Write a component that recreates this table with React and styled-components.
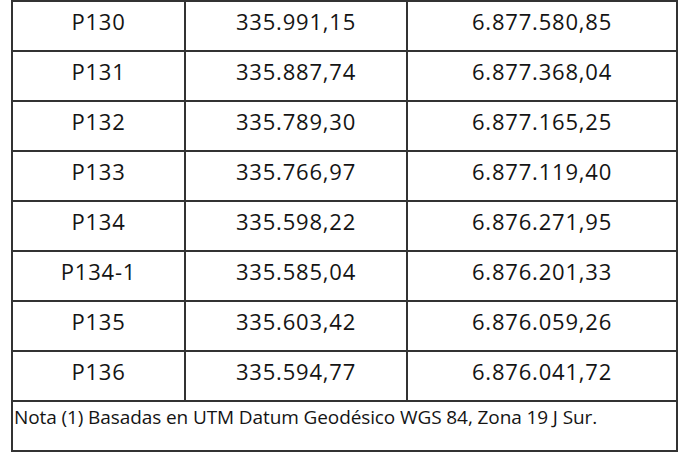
import React from 'react'
import styled, { createGlobalStyle } from 'styled-components'

const GlobalStyle = createGlobalStyle`
  html, body {
    margin: 0;
    padding: 0;
    background: #fff;
  }
  body {
    font-family: 'Open Sans', 'Liberation Sans', sans-serif;
    color: #141414;
  }
`

const Page = styled.div`
  width: 698px;
  height: 459px;
  overflow: hidden;
  background: #fff;
`

const Table = styled.div`
  display: grid;
  grid-template-columns: 173px 222px 270px;
  grid-auto-rows: 50px;
  margin-left: 11px;
  width: max-content;
  border-left: 2px solid #333;
  border-top: 2px solid #333;
`

const Cell = styled.div`
  box-sizing: border-box;
  display: flex;
  align-items: center;
  justify-content: center;
  padding-bottom: 10px;
  border-right: 2px solid #333;
  border-bottom: 2px solid #333;
  font-size: 22px;
  line-height: 26px;
  letter-spacing: 0.8px;
`

const Note = styled.div`
  grid-column: 1 / -1;
  box-sizing: border-box;
  padding: 3px 0 0 1px;
  border-right: 2px solid #333;
  border-bottom: 2px solid #333;
  font-size: 19px;
  line-height: 24px;
  letter-spacing: -0.1px;
  white-space: nowrap;
`

const rows = [
  ['P130', '335.991,15', '6.877.580,85'],
  ['P131', '335.887,74', '6.877.368,04'],
  ['P132', '335.789,30', '6.877.165,25'],
  ['P133', '335.766,97', '6.877.119,40'],
  ['P134', '335.598,22', '6.876.271,95'],
  ['P134-1', '335.585,04', '6.876.201,33'],
  ['P135', '335.603,42', '6.876.059,26'],
  ['P136', '335.594,77', '6.876.041,72'],
]

const App = () => {
  return (
    <>
      <GlobalStyle />
      <Page>
        <Table>
          {rows.map((row) =>
            row.map((value, i) => <Cell key={row[0] + i}>{value}</Cell>)
          )}
          <Note>Nota (1) Basadas en UTM Datum Geodésico WGS 84, Zona 19 J Sur.</Note>
        </Table>
      </Page>
    </>
  )
}

export default App
